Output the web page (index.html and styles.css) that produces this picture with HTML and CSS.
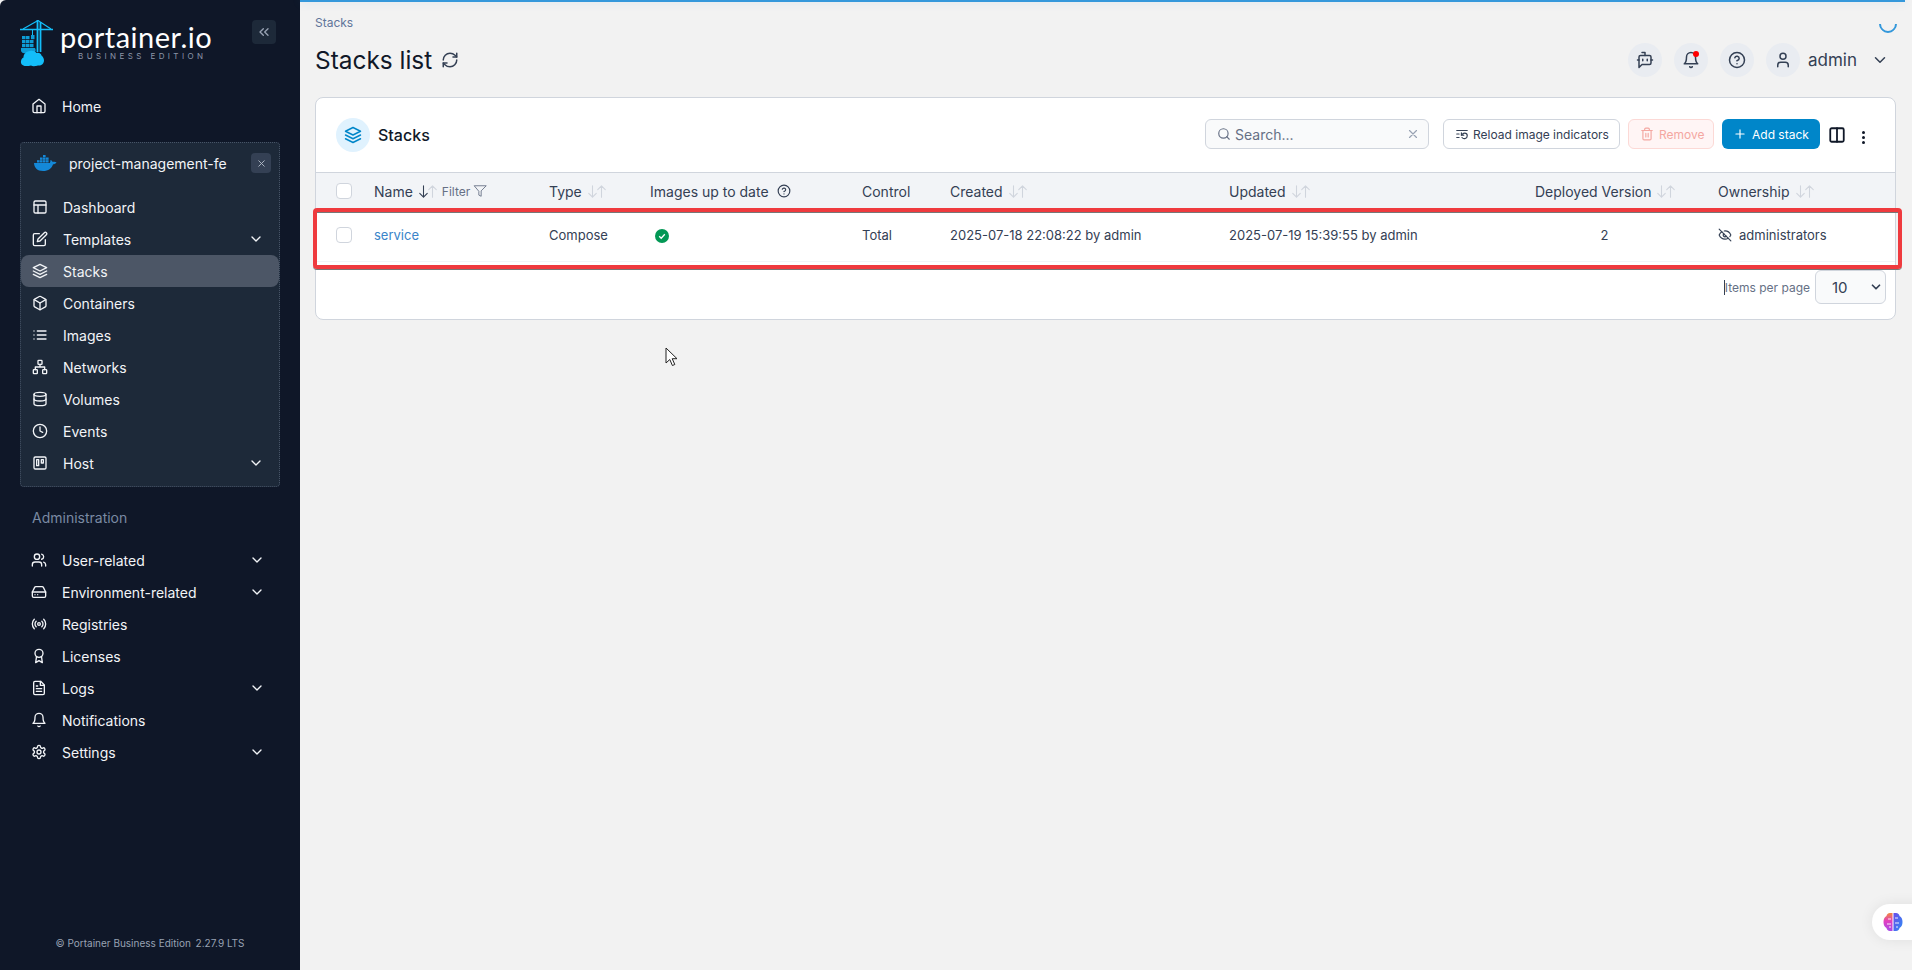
FILE: index.html
```html
<!DOCTYPE html>
<html lang="en">
<head>
<meta charset="utf-8">
<title>Stacks list</title>
<link rel="stylesheet" href="styles.css">
</head>
<body>
<svg class="sprite" width="0" height="0">
  <symbol id="i-home" viewBox="0 0 24 24"><path d="m3 9 9-7 9 7v11a2 2 0 0 1-2 2H5a2 2 0 0 1-2-2z"/><path d="M9 22V12h6v10"/></symbol>
  <symbol id="i-layout" viewBox="0 0 24 24"><rect x="3" y="3" width="18" height="18" rx="2"/><path d="M3 9h18M9 21V9"/></symbol>
  <symbol id="i-edit" viewBox="0 0 24 24"><path d="M11 4H4a2 2 0 0 0-2 2v14a2 2 0 0 0 2 2h14a2 2 0 0 0 2-2v-7"/><path d="M18.500 2.500a2.121 2.121 0 0 1 3 3L12 15l-4 1 1-4 9.500-9.500z"/></symbol>
  <symbol id="i-layers" viewBox="0 0 24 24"><path d="M12 2 2 7l10 5 10-5z"/><path d="m2 17 10 5 10-5"/><path d="m2 12 10 5 10-5"/></symbol>
  <symbol id="i-box" viewBox="0 0 24 24"><path d="M21 16V8a2 2 0 0 0-1-1.730l-7-4a2 2 0 0 0-2 0l-7 4A2 2 0 0 0 3 8v8a2 2 0 0 0 1 1.730l7 4a2 2 0 0 0 2 0l7-4A2 2 0 0 0 21 16z"/><path d="M3.270 6.960 12 12.010l8.730-5.050"/><path d="M12 22.080V12"/></symbol>
  <symbol id="i-list" viewBox="0 0 24 24"><path d="M8 6h13M8 12h13M8 18h13M3 6h.01M3 12h.01M3 18h.01"/></symbol>
  <symbol id="i-network" viewBox="0 0 24 24"><rect x="9" y="2" width="6" height="6" rx="1"/><rect x="16" y="16" width="6" height="6" rx="1"/><rect x="2" y="16" width="6" height="6" rx="1"/><path d="M5 16v-4h14v4M12 12V8"/></symbol>
  <symbol id="i-db" viewBox="0 0 24 24"><ellipse cx="12" cy="5" rx="9" ry="3"/><path d="M21 12c0 1.660-4 3-9 3s-9-1.340-9-3"/><path d="M3 5v14c0 1.660 4 3 9 3s9-1.340 9-3V5"/></symbol>
  <symbol id="i-clock" viewBox="0 0 24 24"><circle cx="12" cy="12" r="10"/><path d="M12 6v6l4 2"/></symbol>
  <symbol id="i-host" viewBox="0 0 24 24"><rect x="3" y="3" width="18" height="18" rx="2"/><rect x="7" y="7" width="3" height="9"/><rect x="14" y="7" width="3" height="5"/></symbol>
  <symbol id="i-users" viewBox="0 0 24 24"><path d="M16 21v-2a4 4 0 0 0-4-4H6a4 4 0 0 0-4 4v2"/><circle cx="9" cy="7" r="4"/><path d="M22 21v-2a4 4 0 0 0-3-3.870"/><path d="M16 3.130a4 4 0 0 1 0 7.750"/></symbol>
  <symbol id="i-drive" viewBox="0 0 24 24"><path d="M22 12H2"/><path d="M5.450 5.110 2 12v6a2 2 0 0 0 2 2h16a2 2 0 0 0 2-2v-6l-3.450-6.890A2 2 0 0 0 16.760 4H7.240a2 2 0 0 0-1.790 1.110z"/><path d="M6 16h.01M10 16h.01"/></symbol>
  <symbol id="i-radio" viewBox="0 0 24 24"><circle cx="12" cy="12" r="2"/><path d="M16.240 7.760a6 6 0 0 1 0 8.490"/><path d="M7.760 16.240a6 6 0 0 1 0-8.490"/><path d="M19.070 4.930a10 10 0 0 1 0 14.140"/><path d="M4.930 19.070a10 10 0 0 1 0-14.140"/></symbol>
  <symbol id="i-award" viewBox="0 0 24 24"><circle cx="12" cy="8" r="6"/><path d="M8.200 13.200 7 22l5-3 5 3-1.200-8.800"/></symbol>
  <symbol id="i-file" viewBox="0 0 24 24"><path d="M14.500 2H6a2 2 0 0 0-2 2v16a2 2 0 0 0 2 2h12a2 2 0 0 0 2-2V7.500L14.500 2z"/><path d="M14 2v6h6M16 13H8M16 17H8M10 9H8"/></symbol>
  <symbol id="i-bell" viewBox="0 0 24 24"><path d="M18 8A6 6 0 0 0 6 8c0 7-3 9-3 9h18s-3-2-3-9"/><path d="M13.730 21a2 2 0 0 1-3.460 0"/></symbol>
  <symbol id="i-gear" viewBox="0 0 24 24"><path d="M12.220 2h-.44a2 2 0 0 0-2 2v.18a2 2 0 0 1-1 1.730l-.43.25a2 2 0 0 1-2 0l-.15-.08a2 2 0 0 0-2.730.73l-.22.38a2 2 0 0 0 .73 2.730l.15.1a2 2 0 0 1 1 1.720v.51a2 2 0 0 1-1 1.740l-.15.09a2 2 0 0 0-.73 2.730l.22.38a2 2 0 0 0 2.730.73l.15-.08a2 2 0 0 1 2 0l.43.25a2 2 0 0 1 1 1.730V20a2 2 0 0 0 2 2h.44a2 2 0 0 0 2-2v-.18a2 2 0 0 1 1-1.730l.43-.25a2 2 0 0 1 2 0l.15.08a2 2 0 0 0 2.730-.73l.22-.39a2 2 0 0 0-.73-2.730l-.15-.08a2 2 0 0 1-1-1.740v-.5a2 2 0 0 1 1-1.740l.15-.09a2 2 0 0 0 .73-2.730l-.22-.38a2 2 0 0 0-2.730-.73l-.15.08a2 2 0 0 1-2 0l-.43-.25a2 2 0 0 1-1-1.730V4a2 2 0 0 0-2-2z"/><circle cx="12" cy="12" r="3"/></symbol>
  <symbol id="i-chev" viewBox="0 0 24 24"><path d="m6 9 6 6 6-6"/></symbol>
  <symbol id="i-chevs" viewBox="0 0 24 24"><path d="m11 17-5-5 5-5M18 17l-5-5 5-5"/></symbol>
  <symbol id="i-x" viewBox="0 0 24 24"><path d="M18 6 6 18M6 6l12 12"/></symbol>
  <symbol id="i-refresh" viewBox="0 0 24 24"><path d="M3 12a9 9 0 0 1 9-9 9.750 9.750 0 0 1 6.740 2.740L21 8"/><path d="M21 3v5h-5"/><path d="M21 12a9 9 0 0 1-9 9 9.750 9.750 0 0 1-6.740-2.740L3 16"/><path d="M8 16H3v5"/></symbol>
  <symbol id="i-bot" viewBox="0 0 24 24"><path d="M12 6V2H8"/><path d="m8 18-4 4V8a2 2 0 0 1 2-2h12a2 2 0 0 1 2 2v8a2 2 0 0 1-2 2Z"/><path d="M2 12h2M9 11v2M15 11v2M20 12h2"/></symbol>
  <symbol id="i-help" viewBox="0 0 24 24"><circle cx="12" cy="12" r="10"/><path d="M9.090 9a3 3 0 0 1 5.830 1c0 2-3 3-3 3M12 17h.01"/></symbol>
  <symbol id="i-user" viewBox="0 0 24 24"><path d="M19 21v-2a4 4 0 0 0-4-4H9a4 4 0 0 0-4 4v2"/><circle cx="12" cy="7" r="4"/></symbol>
  <symbol id="i-search" viewBox="0 0 24 24"><circle cx="11" cy="11" r="8"/><path d="m21 21-4.350-4.350"/></symbol>
  <symbol id="i-trash" viewBox="0 0 24 24"><path d="M3 6h18M19 6v14a2 2 0 0 1-2 2H7a2 2 0 0 1-2-2V6m3 0V4a2 2 0 0 1 2-2h4a2 2 0 0 1 2 2v2M10 11v6M14 11v6"/></symbol>
  <symbol id="i-plus" viewBox="0 0 24 24"><path d="M12 5v14M5 12h14"/></symbol>
  <symbol id="i-cols" viewBox="0 0 24 24"><rect x="3" y="3" width="18" height="18" rx="2"/><path d="M12 3v18"/></symbol>
  <symbol id="i-filter" viewBox="0 0 24 24"><path d="M22 3H2l8 9.460V19l4 2v-8.540z"/></symbol>
  <symbol id="i-eyeoff" viewBox="0 0 24 24"><path d="M9.880 9.880a3 3 0 1 0 4.240 4.240"/><path d="M10.730 5.080A10.430 10.430 0 0 1 12 5c7 0 10 7 10 7a13.160 13.160 0 0 1-1.670 2.680"/><path d="M6.610 6.610A13.526 13.526 0 0 0 2 12s3 7 10 7a9.740 9.740 0 0 0 5.390-1.610"/><path d="m2 2 20 20"/></symbol>
  <symbol id="i-reload" viewBox="0 0 24 24"><path d="M21 6H3M7 12H3M7 18H3"/><path d="M12 18a5 5 0 0 0 9-3 4.500 4.500 0 0 0-4.500-4.500c-1.330 0-2.540.54-3.410 1.410L11 14"/><path d="M11 10v4h4"/></symbol>
  <symbol id="i-down" viewBox="0 0 24 24"><path d="M12 3v18M6 15l6 6 6-6"/></symbol>
  <symbol id="i-up" viewBox="0 0 24 24"><path d="M12 21V3M6 9l6-6 6 6"/></symbol>
</svg>

<aside class="sidebar">
  <div class="brand">
    <svg class="brand-mark" viewBox="0 0 34 47" width="34" height="47">
      <path d="M0 9.500h33" stroke="#13bef9" stroke-width="1.600" fill="none"/>
      <path d="M3 9 18 .5 31 9" stroke="#13bef9" stroke-width="1.200" fill="none"/>
      <path d="M17.500 0v32M20.500 2v30" stroke="#13bef9" stroke-width="1.800" fill="none"/>
      <path d="M12.500 9v7" stroke="#13bef9" stroke-width="1" fill="none"/>
      <g fill="#0d9cd6">
        <rect x="2" y="16" width="3.500" height="3.200"/><rect x="6" y="16" width="3.500" height="3.200"/>
        <rect x="11" y="15" width="3.500" height="4.200"/>
        <rect x="2" y="20" width="3.500" height="3.200"/><rect x="6" y="20" width="3.500" height="3.200"/><rect x="10" y="20" width="3.500" height="3.200"/>
        <rect x="2" y="24" width="3.500" height="3.200"/><rect x="6" y="24" width="3.500" height="3.200"/><rect x="10" y="24" width="3.500" height="3.200"/>
        <path d="M1 28h14c1 2 1 3-.5 4.500-2 .7-3 1-5 1H6c-3 0-5-1-5-3z"/>
      </g>
      <path fill="#13bef9" d="M6 46c-4 0-5.500-2.500-5-5 .3-1.800 1.300-3 2.500-3.500C3.500 34 6 31.500 10 31c3-.5 5 .5 6.500 2 2.500-.5 4.500.5 5 2.500 1.500 1 2.500 3 2.500 5 0 3-2.500 5-5 5-1.500 0-2.500.5-4 .5-1.500.5-3 0-4-.5-1.500.5-3 .5-5 .5z"/>
    </svg>
    <div class="brand-text">
      <div class="brand-name">portainer.io</div>
      <div class="brand-sub">BUSINESS EDITION</div>
    </div>
    <button class="collapse-btn"><svg class="ico"><use href="#i-chevs"/></svg></button>
  </div>

  <a class="nav-row home-row"><svg class="ico"><use href="#i-home"/></svg><span>Home</span></a>

  <section class="env">
    <div class="env-head">
      <svg class="docker" viewBox="0 0 24 16" width="24" height="16">
        <g fill="#1488d8">
          <rect x="3" y="5.200" width="2.600" height="2.300"/><rect x="6" y="5.200" width="2.600" height="2.300"/><rect x="9" y="5.200" width="2.600" height="2.300"/><rect x="12" y="5.200" width="2.600" height="2.300"/>
          <rect x="6" y="2.500" width="2.600" height="2.300"/><rect x="9" y="2.500" width="2.600" height="2.300"/><rect x="12" y="2.500" width="2.600" height="2.300"/>
          <rect x="9" y="0" width="2.600" height="2.200"/>
          <path d="M0 8h15.500c.6 0 1.100-1.500.9-3 1 .2 2 1 2.200 2 1.200-.5 2.600-.5 3.900.2-.8 1.500-2 2-3.400 2C17.500 13.500 14.500 16 9 16 3 16 .3 12.500 0 8z"/>
        </g>
      </svg>
      <span class="env-name">project-management-fe</span>
      <button class="env-close"><svg class="ico"><use href="#i-x"/></svg></button>
    </div>
    <a class="nav-row"><svg class="ico"><use href="#i-layout"/></svg><span>Dashboard</span></a>
    <a class="nav-row"><svg class="ico"><use href="#i-edit"/></svg><span>Templates</span><svg class="ico chev"><use href="#i-chev"/></svg></a>
    <a class="nav-row active"><svg class="ico"><use href="#i-layers"/></svg><span>Stacks</span></a>
    <a class="nav-row"><svg class="ico"><use href="#i-box"/></svg><span>Containers</span></a>
    <a class="nav-row"><svg class="ico"><use href="#i-list"/></svg><span>Images</span></a>
    <a class="nav-row"><svg class="ico"><use href="#i-network"/></svg><span>Networks</span></a>
    <a class="nav-row"><svg class="ico"><use href="#i-db"/></svg><span>Volumes</span></a>
    <a class="nav-row"><svg class="ico"><use href="#i-clock"/></svg><span>Events</span></a>
    <a class="nav-row"><svg class="ico"><use href="#i-host"/></svg><span>Host</span><svg class="ico chev"><use href="#i-chev"/></svg></a>
  </section>

  <div class="admin-label">Administration</div>
  <nav class="admin">
    <a class="nav-row"><svg class="ico"><use href="#i-users"/></svg><span>User-related</span><svg class="ico chev"><use href="#i-chev"/></svg></a>
    <a class="nav-row"><svg class="ico"><use href="#i-drive"/></svg><span>Environment-related</span><svg class="ico chev"><use href="#i-chev"/></svg></a>
    <a class="nav-row"><svg class="ico"><use href="#i-radio"/></svg><span>Registries</span></a>
    <a class="nav-row"><svg class="ico"><use href="#i-award"/></svg><span>Licenses</span></a>
    <a class="nav-row"><svg class="ico"><use href="#i-file"/></svg><span>Logs</span><svg class="ico chev"><use href="#i-chev"/></svg></a>
    <a class="nav-row"><svg class="ico"><use href="#i-bell"/></svg><span>Notifications</span></a>
    <a class="nav-row"><svg class="ico"><use href="#i-gear"/></svg><span>Settings</span><svg class="ico chev"><use href="#i-chev"/></svg></a>
  </nav>
  <footer class="side-foot">© Portainer Business Edition <span class="side-ver">2.27.9 LTS</span></footer>
</aside>

<main class="main">
  <header class="topbar">
    <div class="titles">
      <div class="crumb">Stacks</div>
      <h1 class="page-title">Stacks list <svg class="ico refresh"><use href="#i-refresh"/></svg></h1>
    </div>
    <div class="top-actions">
      <span class="round"><svg class="ico"><use href="#i-bot"/></svg></span>
      <span class="round has-dot"><svg class="ico"><use href="#i-bell"/></svg></span>
      <span class="round"><svg class="ico"><use href="#i-help"/></svg></span>
      <span class="round"><svg class="ico"><use href="#i-user"/></svg></span>
      <span class="username">admin</span>
      <svg class="ico user-chev"><use href="#i-chev"/></svg>
    </div>
  </header>

  <section class="card">
    <div class="card-head">
      <span class="card-badge"><svg class="ico"><use href="#i-layers"/></svg></span>
      <h2 class="card-title">Stacks</h2>
      <div class="search"><svg class="ico"><use href="#i-search"/></svg><span class="search-text">Search...</span><svg class="ico search-x"><use href="#i-x"/></svg></div>
      <button class="btn btn-reload"><svg class="ico"><use href="#i-reload"/></svg>Reload image indicators</button>
      <button class="btn btn-remove"><svg class="ico"><use href="#i-trash"/></svg>Remove</button>
      <button class="btn btn-add"><svg class="ico"><use href="#i-plus"/></svg>Add stack</button>
      <svg class="ico cols"><use href="#i-cols"/></svg>
      <span class="dots"><i></i><i></i><i></i></span>
    </div>

    <div class="tr thead">
      <span class="check"></span>
      <span class="th">Name<span class="sort"><svg class="ico on"><use href="#i-down"/></svg><svg class="ico"><use href="#i-up"/></svg></span><span class="filter">Filter<svg class="ico"><use href="#i-filter"/></svg></span></span>
      <span class="th">Type<span class="sort"><svg class="ico"><use href="#i-down"/></svg><svg class="ico"><use href="#i-up"/></svg></span></span>
      <span class="th">Images up to date<svg class="ico th-help"><use href="#i-help"/></svg></span>
      <span class="th">Control</span>
      <span class="th">Created<span class="sort"><svg class="ico"><use href="#i-down"/></svg><svg class="ico"><use href="#i-up"/></svg></span></span>
      <span class="th">Updated<span class="sort"><svg class="ico"><use href="#i-down"/></svg><svg class="ico"><use href="#i-up"/></svg></span></span>
      <span class="th">Deployed Version<span class="sort"><svg class="ico"><use href="#i-down"/></svg><svg class="ico"><use href="#i-up"/></svg></span></span>
      <span class="th">Ownership<span class="sort"><svg class="ico"><use href="#i-down"/></svg><svg class="ico"><use href="#i-up"/></svg></span></span>
    </div>

    <div class="tr row">
      <span class="check"></span>
      <a class="link">service</a>
      <span>Compose</span>
      <span class="status"><svg viewBox="0 0 14 14" width="14" height="14"><circle cx="7" cy="7" r="7" fill="#039855"/><path d="m4.200 7.200 2 2 3.600-4" fill="none" stroke="#fff" stroke-width="1.300"/></svg></span>
      <span>Total</span>
      <span>2025-07-18 22:08:22 by admin</span>
      <span>2025-07-19 15:39:55 by admin</span>
      <span class="version">2</span>
      <span class="owner"><svg class="ico"><use href="#i-eyeoff"/></svg>administrators</span>
      <div class="annotation"></div>
    </div>

    <div class="pager">
      <span class="caret"></span><span class="pager-label">Items per page</span>
      <div class="select"><span>10</span><svg class="ico"><use href="#i-chev"/></svg></div>
    </div>
  </section>
</main>

<div class="progress"></div>
<div class="spinner"></div>
<svg class="pointer" viewBox="0 0 14 20" width="14" height="20"><path d="M1 1v15l3.800-3.500 2.600 6 2.400-1-2.600-5.800H12z" fill="#fff" stroke="#222" stroke-width="1"/></svg>
<div class="brain-pill">
  <svg viewBox="0 0 20 20" width="20" height="20">
    <defs>
      <linearGradient id="gl" x1="0" y1="0" x2="0" y2="1"><stop offset="0" stop-color="#f08a3c"/><stop offset=".45" stop-color="#e23fc0"/><stop offset="1" stop-color="#a64be8"/></linearGradient>
      <linearGradient id="gr" x1="0" y1="0" x2="1" y2="1"><stop offset="0" stop-color="#6b4be8"/><stop offset="1" stop-color="#2f8cf5"/></linearGradient>
    </defs>
    <path fill="url(#gl)" d="M9.500 1H7C5 1 3.500 2.500 3.500 4 1.500 5 .5 7 .5 10s1 5 3 6c0 1.500 1.500 3 3.500 3h2.500z"/>
    <path fill="url(#gr)" d="M10.500 1H13c2 0 3.500 1.500 3.500 3 2 1 3 3 3 6s-1 5-3 6c0 1.500-1.500 3-3.500 3h-2.500z"/>
    <path d="M5 7h3M4 12h4M12 6h3M12 11h4M6 15h2M13 15h2" stroke="#fff" stroke-width=".9" fill="none"/>
  </svg>
</div>
</body>
</html>
```
FILE: styles.css
```css
* { box-sizing: border-box; }
html, body { height: 100%; }
body {
  margin: 0;
  display: flex;
  height: 970px;
  overflow: hidden;
  background: #f2f2f2;
  font-family: Inter, "Liberation Sans", sans-serif;
  color: #344054;
}
.sprite { position: absolute; }
.ico {
  width: 16px;
  height: 16px;
  flex: none;
  fill: none;
  stroke: currentColor;
  stroke-width: 2;
  stroke-linecap: round;
  stroke-linejoin: round;
}
button { font-family: inherit; padding: 0; border: 0; }

/* Sidebar */
.sidebar {
  width: 300px;
  flex: none;
  display: flex;
  flex-direction: column;
  background: #0f1728;
  border-top-left-radius: 6px;
  color: #f2f4f7;
}
.brand {
  display: flex;
  align-items: flex-start;
  height: 70px;
  padding: 20px 24px 0 20px;
}
.brand-mark { flex: none; }
.brand-text { margin-left: 6px; width: 172px; }
.brand-name {
  font-size: 29px;
  line-height: 26px;
  margin-top: 4px;
  color: #fff;
  font-weight: 400;
  font-family: Lato, Inter, sans-serif;
  letter-spacing: .5px;
}
.brand-sub {
  font-size: 8px;
  line-height: 10px;
  letter-spacing: 3.400px;
  margin-left: 18px;
  margin-top: 1px;
  color: #8c96a8;
  white-space: nowrap;
}
.collapse-btn {
  width: 24px;
  height: 24px;
  margin-left: auto;
  border-radius: 4px;
  background: #1d2939;
  color: #98a2b3;
  display: flex;
  align-items: center;
  justify-content: center;
}
.nav-row {
  display: flex;
  align-items: center;
  gap: 15px;
  height: 32px;
  padding: 0 15px 0 11px;
  font-size: 14px;
  font-weight: 400;
  border-radius: 8px;
  color: #f2f4f7;
}
.nav-row .chev { margin-left: auto; }
.home-row { margin: 20px 20px 0; }
.env {
  margin: 20px 20px 0;
  height: 345px;
  padding-bottom: 7px;
  background: #1d2939;
  border: 1px dotted #475467;
  border-radius: 4px;
}
.env-head {
  display: flex;
  align-items: center;
  height: 48px;
  padding: 0 8px 8px 13px;
}
.docker { flex: none; }
.env-name { margin-left: 11px; font-size: 14px; font-weight: 400; white-space: nowrap; }
.env-close {
  margin-left: auto;
  width: 20px;
  height: 20px;
  border-radius: 4px;
  background: #344054;
  color: #b5bcc8;
  display: flex;
  align-items: center;
  justify-content: center;
}
.env-close .ico { width: 11px; height: 11px; }
.active { background: #4c5666; }
.admin-label {
  margin: 20px 0 15px 32px;
  font-size: 14px;
  line-height: 22px;
  color: #7a8aa3;
}
.admin { margin: 0 20px; }
.side-foot {
  margin-top: auto;
  padding-bottom: 21px;
  text-align: center;
  font-size: 10px;
  line-height: 12px;
  color: #98a2b3;
}
.side-ver { margin-left: 2px; }

/* Main */
.main { flex: 1; min-width: 0; padding: 0 16px 0 15px; }
.topbar {
  display: flex;
  justify-content: space-between;
  align-items: flex-start;
  height: 97px;
}
.crumb { margin-top: 16px; font-size: 12px; line-height: 14px; color: #61759a; }
.page-title {
  display: flex;
  align-items: center;
  gap: 9px;
  margin: 13px 0 0;
  font-size: 24.400px;
  line-height: 34px;
  font-weight: 400;
  color: #101828;
}
.refresh { width: 18px; height: 18px; color: #344054; }
.top-actions {
  display: flex;
  align-items: center;
  gap: 12px;
  margin-top: 43px;
  margin-right: 7px;
  color: #344054;
}
.round {
  width: 34px;
  height: 34px;
  border-radius: 50%;
  background: #e9ecf1;
  display: flex;
  align-items: center;
  justify-content: center;
  position: relative;
}
.round .ico { width: 18px; height: 18px; }
.has-dot::after {
  content: "";
  position: absolute;
  top: 8px;
  right: 9px;
  width: 6px;
  height: 6px;
  border-radius: 50%;
  background: #f00;
}
.username { margin-left: -4px; font-size: 17px; color: #344054; }
.user-chev { width: 18px; height: 18px; margin-left: 2px; }

/* Card */
.card {
  height: 223px;
  background: #fff;
  border: 1px solid #d0d5dd;
  border-radius: 8px;
  font-size: 13px;
}
.card-head {
  display: flex;
  align-items: center;
  height: 75px;
  padding: 0 30px 0 20px;
  border-bottom: 1px solid #d0d5dd;
}
.card-badge {
  width: 34px;
  height: 34px;
  border-radius: 50%;
  background: #e0f2fe;
  color: #0086c9;
  display: flex;
  align-items: center;
  justify-content: center;
}
.card-badge .ico { width: 18px; height: 18px; }
.card-title { margin: 0 0 0 8px; font-size: 16px; font-weight: 500; color: #101828; }
.search {
  display: flex;
  align-items: center;
  width: 224px;
  height: 30px;
  margin-left: auto;
  padding: 0 8px 0 11px;
  background: #f9fafb;
  border: 1px solid #d0d5dd;
  border-radius: 6px;
  color: #667085;
  transform: translateY(-1px);
}
.search .ico { width: 14px; height: 14px; }
.search-text { margin-left: 4px; font-size: 14px; }
.search-x { margin-left: auto; color: #98a2b3; }
.btn {
  display: flex;
  align-items: center;
  gap: 5px;
  height: 30px;
  border-radius: 6px;
  font-size: 12px;
  font-weight: 400;
  transform: translateY(-1px);
  white-space: nowrap;
}
.btn .ico { width: 14px; height: 14px; }
.btn-reload {
  width: 177px;
  margin-left: 14px;
  padding-left: 11px;
  gap: 4px;
  background: #fff;
  border: 1px solid #d0d5dd;
  color: #344054;
}
.btn-remove {
  width: 86px;
  margin-left: 8px;
  padding-left: 11px;
  background: #fff5f5;
  border: 1px solid #fcd9d6;
  color: #f4a7a1;
}
.btn-add {
  width: 98px;
  margin-left: 8px;
  padding-left: 11px;
  background: #0086c9;
  color: #fff;
}
.cols { width: 18px; height: 18px; margin-left: 8px; stroke-width: 2.400; color: #101828; }
.dots {
  display: flex;
  flex-direction: column;
  gap: 2px;
  margin-left: 16px;
  margin-top: 4px;
}
.dots i { width: 3px; height: 3px; border-radius: 50%; background: #101828; }

.tr {
  display: grid;
  grid-template-columns: 38px 175px 101px 212px 88px 279px 306px 183px 1fr;
  align-items: center;
  padding-left: 20px;
  position: relative;
}
.thead { height: 36px; background: #f2f4f7; font-size: 14px; }
.th { display: flex; align-items: center; white-space: nowrap; color: #344054; }
.sort { display: inline-flex; margin-left: 3px; color: #d0d5dd; }
.sort .ico { width: 15px; height: 15px; margin-right: -6px; stroke-width: 1.700; }
.sort .on { color: #344054; }
.filter { display: inline-flex; align-items: center; gap: 3px; margin-left: 8px; font-size: 12px; color: #667085; }
.filter .ico { width: 14px; height: 14px; stroke-width: 1.500; }
.th-help { width: 14px; height: 14px; margin-left: 8px; }
.check {
  width: 16px;
  height: 16px;
  background: #fff;
  border: 1px solid #d0d5dd;
  border-radius: 4px;
}
.row { height: 53px; border-bottom: 1px solid #f2f4f7; color: #344054; white-space: nowrap; }
.link { color: #3a84c9; }
.status { display: flex; padding-left: 5px; padding-top: 2px; }
.version { width: 139px; text-align: center; }
.owner { display: flex; align-items: center; gap: 7px; font-size: 13px; }
.owner .ico { width: 14px; height: 14px; }
.annotation {
  position: absolute;
  left: -3px;
  right: -7px;
  top: -1px;
  height: 61px;
  border: 4px solid #ef3a3e;
  border-radius: 4px;
  box-shadow: 0 1px 0 #777, inset 0 1px 0 #777;
  pointer-events: none;
}
.pager {
  display: flex;
  align-items: center;
  justify-content: flex-end;
  height: 50px;
  padding: 0 9px 0 0;
}
.caret { width: 1px; height: 15px; background: #344054; }
.pager-label { font-size: 12px; color: #667085; margin-right: 5px; }
.select {
  display: flex;
  align-items: center;
  justify-content: space-between;
  width: 71px;
  height: 34px;
  padding: 0 2px 0 16px;
  background: #f9fafb;
  border: 1px solid #d0d5dd;
  border-radius: 6px;
  font-size: 15px;
  color: #344054;
}
.select .ico { width: 14px; height: 14px; stroke-width: 3; }

/* Overlays */
.progress {
  position: absolute;
  top: 0;
  left: 300px;
  right: 7px;
  height: 2px;
  background: #3498db;
  box-shadow: 0 0 8px rgba(52, 152, 219, .25);
}
.spinner {
  position: absolute;
  top: 15px;
  left: 1879px;
  width: 18px;
  height: 18px;
  border: 2px solid transparent;
  border-bottom-color: #3498db;
  border-left-color: #3498db;
  border-radius: 50%;
  transform: rotate(-45deg);
}
.pointer { position: absolute; left: 665px; top: 347px; }
.brain-pill {
  position: absolute;
  left: 1872px;
  top: 904px;
  width: 60px;
  height: 36px;
  padding: 8px 0 0 11px;
  background: #fff;
  border-radius: 18px 0 0 18px;
  box-shadow: 0 0 14px rgba(0, 0, 0, .08);
}
```
